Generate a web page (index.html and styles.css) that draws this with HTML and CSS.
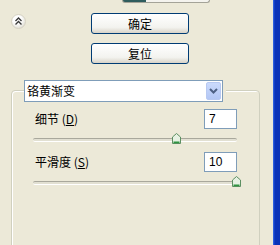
FILE: index.html
```html
<!DOCTYPE html>
<html lang="zh-CN">
<head>
    <meta charset="UTF-8">
    <title>铬黄渐变</title>
    <link rel="stylesheet" href="styles.css">
</head>
<body>
<div class="window">
    <main class="panel">
        <div class="stub"></div>
        <div class="header">
            <button class="collapse" aria-label="收起">
                <svg width="13" height="13" viewBox="0 0 13 13">
                    <path d="M3.5 6 L6.5 3 L9.5 6 M3.5 9.5 L6.5 6.5 L9.5 9.5" fill="none" stroke="#3a3a3a" stroke-width="1.4"/>
                </svg>
            </button>
            <div class="actions">
                <button class="btn">确定</button>
                <button class="btn">复位</button>
            </div>
        </div>
        <div class="group">
            <div class="select">
                <span class="select-value">铬黄渐变</span>
                <span class="select-arrow">
                    <svg width="9" height="6" viewBox="0 0 9 6">
                        <path d="M1 1 L4.5 4.5 L8 1" fill="none" stroke="#4D6185" stroke-width="2"/>
                    </svg>
                </span>
            </div>
            <div class="field">
                <label>细节 (<u>D</u>)</label>
                <div class="num">7</div>
                <div class="slider">
                    <div class="track"></div>
                    <svg class="thumb" style="left: calc(70% - 4px)" width="9" height="11" viewBox="0 0 9 11">
                        <path d="M4.5 0.5 L8.5 4 L8.5 10.5 L0.5 10.5 L0.5 4 Z" fill="#e6f1e2" stroke="#5d8f62"/>
                        <path d="M1.5 9.3 H7.5" stroke="#2f9440" stroke-width="1.6"/>
                    </svg>
                </div>
            </div>
            <div class="field">
                <label>平滑度 (<u>S</u>)</label>
                <div class="num">10</div>
                <div class="slider">
                    <div class="track"></div>
                    <svg class="thumb" style="left: calc(100% - 5px)" width="9" height="11" viewBox="0 0 9 11">
                        <path d="M4.5 0.5 L8.5 4 L8.5 10.5 L0.5 10.5 L0.5 4 Z" fill="#e6f1e2" stroke="#5d8f62"/>
                        <path d="M1.5 9.3 H7.5" stroke="#2f9440" stroke-width="1.6"/>
                    </svg>
                </div>
            </div>
        </div>
    </main>
    <div class="edge"></div>
</div>
</body>
</html>
```

FILE: styles.css
```css
body {
    margin: 0;
    background: #ECE9D8;
    font: 12px "Noto Sans CJK SC", sans-serif;
    color: #000;
}
.window {
    display: grid;
    grid-template-columns: 273px 7px;
    height: 245px;
    overflow: hidden;
}
.panel {
    overflow: hidden;
}
.stub {
    margin-left: 122px;
    width: 88px;
    height: 3px;
    box-sizing: border-box;
    border: 1px solid #a4a398;
    border-top: none;
    border-radius: 0 0 3px 3px;
    background: linear-gradient(to right, #2f5d5e 0 23px, #f4f3ee 23px);
}
.header {
    display: flex;
    padding: 10px 0 0 11px;
}
.collapse {
    width: 15px;
    height: 15px;
    margin-top: 1px;
    padding: 0;
    border: 1px solid #d6d2c4;
    border-radius: 50%;
    background: radial-gradient(circle at 40% 35%, #fff 35%, #d3d0c2);
    display: grid;
    place-items: center;
}
.actions {
    display: flex;
    flex-direction: column;
    gap: 9px;
    margin-left: 65px;
}
.btn {
    width: 98px;
    height: 21px;
    padding: 0;
    border: 1px solid #003C74;
    border-radius: 3px;
    background: linear-gradient(#fff, #f3f3ef 70%, #d8d3c8);
    font: 12px/19px "Noto Sans CJK SC", sans-serif;
    color: #000;
}
.group {
    margin: 26px 0 0 11px;
    width: 249px;
    height: 200px;
    box-sizing: border-box;
    border: 1px solid #d0d0bf;
    border-radius: 4px;
    padding: 0 22px 0 21px;
    box-shadow: inset 1px 1px 0 #fff;
}
.select {
    display: flex;
    width: 199px;
    height: 22px;
    margin: -11px 0 0 -9px;
    box-sizing: border-box;
    border: 1px solid #7F9DB9;
    background: #fff;
    box-shadow: 3px 0 0 #ECE9D8;
}
.select-value {
    flex: 1;
    padding-left: 2px;
    line-height: 20px;
}
.select-arrow {
    width: 15px;
    margin: 1px;
    box-sizing: border-box;
    border: 1px solid #b8c9f1;
    border-radius: 2px;
    background: linear-gradient(#cbdafc, #b3c7f5);
    display: grid;
    place-items: center;
}
.field {
    display: grid;
    grid-template-columns: 1fr 33px;
    align-items: center;
    margin-top: 7px;
}
.field label {
    padding-left: 2px;
    line-height: 20px;
}
.num {
    height: 20px;
    box-sizing: border-box;
    border: 1px solid #7F9DB9;
    background: #fff;
    padding-left: 4px;
    font: 12px/18px "Liberation Sans", sans-serif;
}
.slider {
    grid-column: 1 / -1;
    position: relative;
    height: 12px;
    margin-top: 4px;
}
.track {
    margin-top: 5px;
    height: 2px;
    border-top: 1px solid #a9a89c;
    border-bottom: 1px solid #fff;
    border-radius: 2px;
    background: #e2e0d2;
}
.thumb {
    position: absolute;
    top: 0;
}
.edge {
    background: linear-gradient(to right, #2d5fdc 0 1px, #1240c8 1px 2px, #0a33b8 2px);
}
```
